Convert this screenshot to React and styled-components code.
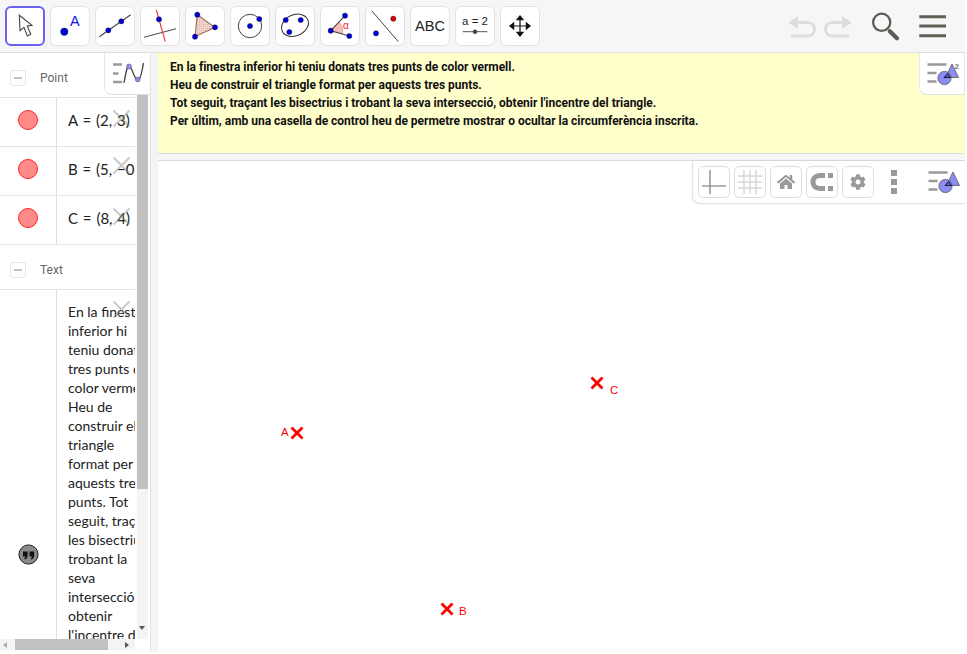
import React from "react";
import styled, { createGlobalStyle } from "styled-components";
import { FaHome, FaCog } from "react-icons/fa";

const Global = createGlobalStyle`
  html, body { margin: 0; padding: 0; background: #fff; overflow: hidden; }
  * { box-sizing: border-box; }
`;

const Page = styled.div`
  width: 965px; height: 652px; display: flex; flex-direction: column;
  font-family: Roboto, "Liberation Sans", sans-serif; background: #fff; overflow: hidden;
`;
const Toolbar = styled.header`
  height: 53px; flex: none; display: flex; align-items: flex-start; gap: 5px;
  padding: 6px 0 0 5px; background: #f6f6f6; border-bottom: 1px solid #dedede;
`;
const ToolButton = styled.button`
  width: 40px; height: 40px; flex: none; padding: 0; background: #fff; border-radius: 6px;
  border: ${(p) => (p.$active ? "2px solid #6a63ee" : "1px solid #e2e2e2")};
  display: flex; align-items: center; justify-content: center;
  font: 14.5px "Liberation Sans", sans-serif; color: #222;
  svg { flex: none; display: block; }
`;
const ToolbarEnd = styled.div`
  margin-left: auto; display: flex; align-items: center; height: 40px;
`;
const Main = styled.div`flex: 1; min-height: 0; display: flex;`;

const AlgebraPanel = styled.aside`
  position: relative; width: 150px; flex: none; display: grid;
  grid-template-columns: 135px 2px 11px 2px; grid-template-rows: 586px 11px; background: #fff;
`;
const AlgebraList = styled.div`overflow: hidden; grid-column: 1; grid-row: 1;`;
const GroupHeader = styled.div`
  height: ${(p) => p.$h}px; display: flex; align-items: center; gap: 14px;
  padding: ${(p) => p.$top}px 0 0 10px; border-bottom: 1px solid #e4e4e4;
  font-size: 12px; color: #666;
`;
const Collapse = styled.span`
  width: 16px; height: 16px; border: 1px solid #e6e6e6; border-radius: 3px; background: #fff;
  display: flex; align-items: center; justify-content: center;
  &::before { content: ""; width: 8px; height: 2px; background: #c4c4c4; }
`;
const ItemRow = styled.div`
  position: relative; height: ${(p) => p.$h}px; display: grid; grid-template-columns: 57px 1fr;
  border-bottom: 1px solid #e4e4e4;
`;
const MarbleCell = styled.div`
  display: flex; align-items: center; justify-content: center; border-right: 1px solid #e0e0e0;
  padding-bottom: ${(p) => p.$lift || 0}px;
`;
const Marble = styled.span`
  width: 20px; height: 20px; border-radius: 50%; background: #ff8a8a; border: 1px solid #f22;
`;
const ItemValue = styled.div`
  padding: ${(p) => p.$top}px 0 0 11px; overflow: hidden; white-space: nowrap;
  font: ${(p) => p.$size}px/19px Lato, "Open Sans", sans-serif; color: #222;
  word-spacing: ${(p) => p.$wordGap || 0}px;
`;
const TextLine = styled.div``;
const DeleteMark = styled.svg`
  position: absolute; left: 112px; top: ${(p) => p.$top}px;
`;
const VTrack = styled.div`
  position: relative; grid-column: 3; grid-row: 1; background: #f4f4f4;
`;
const VThumb = styled.div`height: 436px; background: #c1c1c1;`;
const ArrowDown = styled.span`
  position: absolute; left: 2px; bottom: 9px; width: 0; height: 0;
  border-left: 3.5px solid transparent; border-right: 3.5px solid transparent; border-top: 4px solid #555;
`;
const HTrack = styled.div`
  grid-column: 1; grid-row: 2; display: flex; align-items: center; background: #f4f4f4; padding-left: 3px;
`;
const ArrowSide = styled.span`
  width: 0; height: 0; border-top: 3.5px solid transparent; border-bottom: 3.5px solid transparent;
  ${(p) => (p.$left ? "border-right: 4px solid #aaa;" : "border-left: 4px solid #555;")}
`;
const HThumb = styled.div`
  width: 93px; height: 11px; background: #c1c1c1; margin: 0 17px 0 8px;
`;
const Toggle = styled.div`
  position: absolute; left: ${(p) => p.$left}px; top: 0; width: ${(p) => p.$w}px; height: 42px; background: #fff;
  border-bottom-left-radius: 8px; border-left: 1px solid #e6e6e6; border-bottom: 1px solid #e0e0e0;
  border-right: 1px solid #e6e6e6; display: flex; align-items: center; justify-content: center;
`;
const Splitter = styled.div`
  width: 8px; flex: none; background: #f4f4f4; border-left: 1px solid #e4e4e4;
`;
const RightColumn = styled.div`flex: 1; min-width: 0; display: flex; flex-direction: column;`;
const Notes = styled.section`
  position: relative; height: 101px; flex: none; background: #ffffcc; border-bottom: 1px solid #dcdcdc;
  padding: 5px 0 0 12px; font: bold 12px/18px Roboto, sans-serif; color: #111; letter-spacing: -0.02px;
`;
const NotesLine = styled.div`white-space: nowrap;`;
const HSplit = styled.div`
  height: 7px; flex: none; background: #f6f6f6; border-bottom: 1px solid #dedede;
`;
const Graphics = styled.main`position: relative; flex: 1; background: #fff;`;
const StyleBar = styled.div`
  position: absolute; right: 0; top: 0; width: 273px; height: 43px; background: #fff;
  border: 1px solid #e2e2e2; border-top: 0; border-right: 0; border-bottom-left-radius: 8px;
  box-shadow: 0 0 2px rgba(0,0,0,.12);
  display: flex; align-items: center; gap: 4px; padding: 0 0 0 5px;
`;
const StyleButton = styled.div`
  width: 32px; height: 32px; flex: none; border: 1px solid #dedede; border-radius: 5px; background: #fff;
  display: flex; align-items: center; justify-content: center; color: #9a9a9a;
`;
const MoreDots = styled.div`
  width: 6px; height: 24px; margin: 0 24.5px 0 13px; flex: none; display: flex; flex-direction: column; justify-content: space-between;
  span { display: block; height: 6px; background: #9a9a9a; }
`;
const PointMark = styled.svg`
  position: absolute; left: ${(p) => p.$x - 8}px; top: ${(p) => p.$y - 8}px;
`;
const PointLabel = styled.span`
  position: absolute; left: ${(p) => p.$x}px; top: ${(p) => p.$y}px;
  font: 11.5px/14px "Liberation Sans", sans-serif; color: #f00;
`;

const Dot = ({ x, y, r = 2.6, c = "#0000d8" }) => <circle cx={x} cy={y} r={r} fill={c} stroke="#112" strokeWidth=".4" />;
const I = ({ children, w = 40, h = 40 }) => <svg width={w} height={h} viewBox={`0 0 ${w} ${h}`}>{children}</svg>;

const tools = [
  <I><path d="M14.3 9.3 15 24.7 19 21.3 22.3 30 25.7 28.3 22.3 20 27 19.3Z" fill="#fff" stroke="#444" strokeWidth="1.1" /></I>,
  <I><Dot x={14.3} y={25.7} r={3.7} /><text x={20} y={19.5} fontFamily="Liberation Sans" fontSize="14.5" fill="#1414e6">A</text></I>,
  <I><path d="M4.3 30.7 35.7 8.7" stroke="#444" strokeWidth="1.1" /><Dot x={13.3} y={24.3} /><Dot x={26.3} y={15.3} /></I>,
  <I><path d="M4 31.3 36 22.7" stroke="#555" strokeWidth="1.1" /><path d="M16.3 4 25.3 35.7" stroke="#e33" strokeWidth="1.1" /><Dot x={19} y={13.3} /></I>,
  <I>
    <defs>
      <pattern id="dots" width="2" height="2" patternUnits="userSpaceOnUse">
        <rect width="2" height="2" fill="#ead9d2" />
        <rect width="1" height="1" fill="#f2a8a0" />
      </pattern>
    </defs>
    <path d="M12.3 8.7 30 21.3 10 30.7Z" fill="url(#dots)" stroke="#a06a55" strokeWidth="1.1" /><Dot x={12.3} y={8.7} /><Dot x={30} y={21.3} /><Dot x={10} y={30.7} />
  </I>,
  <I><circle cx="20" cy="20" r="11.7" fill="none" stroke="#444" strokeWidth="1" /><Dot x={20} y={20} /><Dot x={29.3} y={13} /></I>,
  <I><ellipse cx="20" cy="19.3" rx="14" ry="10.5" fill="none" stroke="#333" strokeWidth="1" transform="rotate(-25 20 19.3)" /><Dot x={10.7} y={14} /><Dot x={25.7} y={14} /><Dot x={14.3} y={26} /></I>,
  <I><path d="M10.7 24.7 19 16A12 12 0 0 1 22.5 27.5Z" fill="#f6bcbc" stroke="#e88" strokeWidth=".6" /><path d="M25 9.7 10.7 24.7 29.3 30" fill="none" stroke="#444" strokeWidth="1.1" /><Dot x={10.7} y={24.7} /><Dot x={25} y={9.7} /><Dot x={29.3} y={30} /><text x={23} y={22.5} fontFamily="Liberation Sans" fontSize="10" fill="#e22">α</text></I>,
  <I><path d="M6.7 4.7 33.3 35.7" stroke="#444" strokeWidth="1" /><Dot x={11} y={27.3} /><Dot x={28.3} y={12.7} c="#e00000" /></I>,
  "ABC",
  <I><text x="20" y="19" textAnchor="middle" fontFamily="Liberation Sans" fontSize="11.5" fill="#222">a = 2</text><path d="M7.7 25.7H32.3" stroke="#555" strokeWidth="1" /><circle cx="20" cy="25.7" r="2.2" fill="#444" /></I>,
  <I><path d="M20 12v16M12 20h16" stroke="#111" strokeWidth="1.2" /><path d="M20 9l-4.2 5.2h8.4ZM20 31l-4.2-5.2h8.4ZM9 20l5.2-4.2v8.4ZM31 20l-5.2-4.2v8.4Z" fill="#111" /></I>,
];

const StyleIcon = ({ sup }) => (
  <svg width="34" height="26" viewBox="-1.5 0 34 26">
    <path d="M1 3.5H20M1 12H10M1 20.5H10" stroke="#9a9a9a" strokeWidth="2.6" />
    <path d="M25.5 3 32 16.5H19Z" fill="#8c8cf5" stroke="#555" strokeWidth=".8" />
    <circle cx="18" cy="17" r="6.6" fill="#8c8cf5" stroke="#555" strokeWidth=".8" />
    <path d="M21 12.5 24 16.5H17.5Z" fill="#5a5ad8" stroke="#111" strokeWidth=".9" />
    {sup && <text x="28" y="8" fontFamily="Liberation Sans" fontSize="8" fill="#777">2</text>}
  </svg>
);

const AlgebraIcon = () => (
  <svg width="34" height="24" viewBox="-2 0 34 24">
    <path d="M0 2.5H9M0 11.5H5.5M0 20H9" stroke="#9a9a9a" strokeWidth="2.6" />
    <path d="M11 21C13 10 14 4 16 4 19 4 21 18 25 18 28 18 29 8 30.5 1" fill="none" stroke="#444" strokeWidth="1.3" />
    <circle cx="16" cy="4.5" r="2.4" fill="#8c8cf5" stroke="#555" strokeWidth=".6" />
    <circle cx="24.7" cy="17.5" r="2.4" fill="#8c8cf5" stroke="#555" strokeWidth=".6" />
  </svg>
);

const Cross = ({ top }) => (
  <DeleteMark $top={top} width="19" height="19" viewBox="0 0 19 19">
    <path d="M1.5 1.5 17.5 17.5M17.5 1.5 1.5 17.5" stroke="#888" strokeOpacity=".45" strokeWidth="2" />
  </DeleteMark>
);

const points = [
  { name: "A", value: "A = (2, 3)" },
  { name: "B", value: "B = (5, −0.5)" },
  { name: "C", value: "C = (8, 4)" },
];
const textLines = ["En la finestra", "inferior hi", "teniu donats", "tres punts de", "color vermell.", "Heu de", "construir el", "triangle", "format per", "aquests tres", "punts. Tot", "seguit, traçant", "les bisectrius i", "trobant la", "seva", "intersecció,", "obtenir", "l'incentre del"];
const notes = [
  "En la finestra inferior hi teniu donats tres punts de color vermell.",
  "Heu de construir el triangle format per aquests tres punts.",
  "Tot seguit, traçant les bisectrius i trobant la seva intersecció, obtenir l'incentre del triangle.",
  "Per últim, amb una casella de control heu de permetre mostrar o ocultar la circumferència inscrita.",
];
const marks = [
  { x: 139, y: 272, lx: 123, ly: 264, t: "A" },
  { x: 289, y: 448, lx: 301, ly: 443, t: "B" },
  { x: 439, y: 222, lx: 452, ly: 222, t: "C" },
];

export default function App() {
  return (
    <Page>
      <Global />
      <Toolbar>
        {tools.map((t, i) => <ToolButton key={i} $active={i === 0}>{t}</ToolButton>)}
        <ToolbarEnd>
          <svg width="178" height="40" viewBox="0 0 178 40">
            <g fill="none" stroke="#dcdcdc" strokeWidth="3">
              <path d="M10 16.5H20C30 16.5 30 30 20 30H4" />
              <path d="M56 16.5H46C36 16.5 36 30 46 30H62" />
            </g>
            <path d="M1.5 16.5 11 10V23ZM64.7 16.5 55 10V23Z" fill="#dcdcdc" />
            <circle cx="94.7" cy="16.3" r="8.6" fill="none" stroke="#5a5a52" strokeWidth="2.2" />
            <path d="M102.8 25.2 110 32.3" stroke="#5a5a52" strokeWidth="4.2" strokeLinecap="round" />
            <path d="M132.3 10.7H159M132.3 20H159M132.3 29.7H159" stroke="#5f5f55" strokeWidth="3" />
          </svg>
        </ToolbarEnd>
      </Toolbar>
      <Main>
        <AlgebraPanel>
          <AlgebraList>
            <GroupHeader $h={45} $top={6}><Collapse />Point</GroupHeader>
            {points.map((p, i) => (
              <ItemRow key={p.name} $h={49}>
                <MarbleCell $lift={4}><Marble /></MarbleCell>
                <ItemValue $top={13} $size={15} $wordGap={1}>{p.value}</ItemValue>
                <Cross top={i === 1 ? 9 : 11} />
              </ItemRow>
            ))}
            <GroupHeader $h={45} $top={5}><Collapse />Text</GroupHeader>
            <ItemRow $h={529}>
              <MarbleCell>
                <svg width="21" height="21" viewBox="0 0 21 21">
                  <circle cx="10.5" cy="10.5" r="9.6" fill="#8a8a8a" stroke="#222" strokeWidth="1" />
                  <path d="M5 7.5h4.6v4.2c0 2-1 3.2-2.8 3.8l-.5-1.3c.9-.4 1.2-1 1.2-1.7H5ZM11.5 7.5h4.6v4.2c0 2-1 3.2-2.8 3.8l-.5-1.3c.9-.4 1.2-1 1.2-1.7h-2.5Z" fill="#111" />
                </svg>
              </MarbleCell>
              <ItemValue $top={12} $size={14}>{textLines.map((l) => <TextLine key={l}>{l}</TextLine>)}</ItemValue>
              <Cross top={10} />
            </ItemRow>
          </AlgebraList>
          <VTrack><VThumb /><ArrowDown /></VTrack>
          <HTrack><ArrowSide $left /><HThumb /><ArrowSide /></HTrack>
          <Toggle $left={104} $w={47}><AlgebraIcon /></Toggle>
        </AlgebraPanel>
        <Splitter />
        <RightColumn>
          <Notes>
            {notes.map((n) => <NotesLine key={n}>{n}</NotesLine>)}
            <Toggle $left={761} $w={46}><StyleIcon sup /></Toggle>
          </Notes>
          <HSplit />
          <Graphics>
            <StyleBar>
              <StyleButton>
                <svg width="26" height="26" viewBox="0 0 26 26"><path d="M1 17H25M9 1V25" stroke="#9a9a9a" strokeWidth="1.6" /></svg>
              </StyleButton>
              <StyleButton>
                <svg width="26" height="26" viewBox="0 0 26 26"><path d="M1 7H25M1 13H25M1 19H25M7 1V25M13 1V25M19 1V25" stroke="#d6d6d6" strokeWidth="1.4" /></svg>
              </StyleButton>
              <StyleButton><FaHome size={18} /></StyleButton>
              <StyleButton>
                <svg width="24" height="20" viewBox="0 0 24 20">
                  <path d="M15 3.5H10C5 3.5 3 6.5 3 10s2 6.5 7 6.5H15" fill="none" stroke="#9a9a9a" strokeWidth="5" />
                  <path d="M18 1H23V6H18ZM18 14H23V19H18Z" fill="#9a9a9a" />
                </svg>
              </StyleButton>
              <StyleButton><FaCog size={16} /></StyleButton>
              <MoreDots><span /><span /><span /></MoreDots>
              <StyleIcon />
            </StyleBar>
            {marks.map((m) => (
              <React.Fragment key={m.t}>
                <PointMark $x={m.x} $y={m.y} width="16" height="16" viewBox="0 0 16 16">
                  <path d="M2.5 2.5 13.5 13.5M13.5 2.5 2.5 13.5" stroke="#f00" strokeWidth="2.8" />
                </PointMark>
                <PointLabel $x={m.lx} $y={m.ly}>{m.t}</PointLabel>
              </React.Fragment>
            ))}
          </Graphics>
        </RightColumn>
      </Main>
    </Page>
  );
}
